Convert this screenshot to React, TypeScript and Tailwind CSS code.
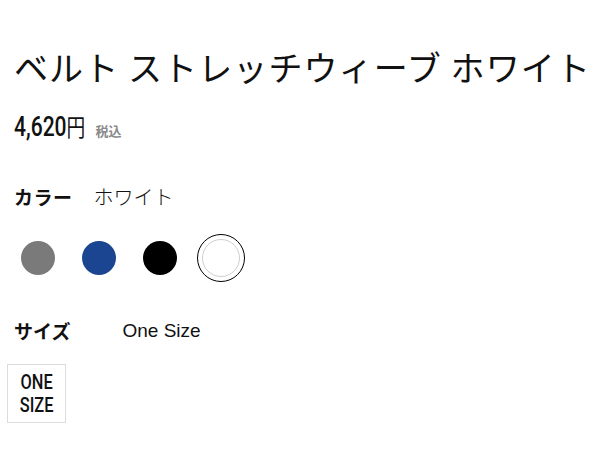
import { useState } from 'react'

const jp = { fontFamily: '"Noto Sans CJK JP", "Noto Sans", sans-serif' }
const cond = { fontFamily: '"Roboto", "Liberation Sans", sans-serif' }

type Swatch = { id: string; name: string; fill: string; ring?: string }

const swatches: Swatch[] = [
  { id: 'gray', name: 'グレー', fill: 'bg-[#7a7a7a]' },
  { id: 'navy', name: 'ネイビー', fill: 'bg-[#1b4591]' },
  { id: 'black', name: 'ブラック', fill: 'bg-black' },
  { id: 'white', name: 'ホワイト', fill: 'bg-white', ring: 'border border-[#cfcfcf]' },
]

export default function App() {
  const [selected, setSelected] = useState('white')
  const current = swatches.find((s) => s.id === selected)

  return (
    <div className="min-h-[450px] w-[600px] bg-white px-[14px] pt-[42px] text-[#111]" style={jp}>
      <h1 className="whitespace-nowrap text-[34px] font-normal leading-[50px] tracking-[1.1px]">ベルト ストレッチウィーブ ホワイト</h1>

      <div className="mt-[22px] flex items-baseline">
        <span className="inline-block origin-left scale-x-[0.78] whitespace-nowrap text-[27px] font-medium leading-none" style={cond}>
          4,620<span style={jp} className="text-[24px] font-normal">円</span>
        </span>
        <span className="-ml-[10px] text-[13px] font-bold text-[#8a8a8a]">税込</span>
      </div>

      <div className="mt-[41px] flex items-center leading-[30px]">
        <span className="text-[19px] font-bold tracking-[0.5px]">カラー</span>
        <span className="ml-[21px] text-[20px] font-light">{current?.name}</span>
      </div>

      <div className="mt-[22px] flex gap-[13px]">
        {swatches.map((s) => (
          <button
            key={s.id}
            type="button"
            onClick={() => setSelected(s.id)}
            aria-label={s.name}
            className={`flex h-[48px] w-[48px] items-center justify-center rounded-full border-[1.5px] ${
              selected === s.id ? 'border-black' : 'border-transparent'
            }`}
          >
            <span className={`block rounded-full ${s.fill} ${s.ring ?? ''} ${s.id === 'white' ? 'h-[38px] w-[38px]' : 'h-[34px] w-[34px]'}`} />
          </button>
        ))}
      </div>

      <div className="mt-[34px] flex items-center leading-[30px]">
        <span className="text-[19px] font-bold">サイズ</span>
        <span className="ml-[52px] text-[19px]" style={{ fontFamily: '"Liberation Sans", Arial, sans-serif' }}>
          One Size
        </span>
      </div>

      <div className="-ml-[7px] mt-[18px] flex h-[59px] w-[59px] flex-col items-center justify-center border border-[#dcdcdc]">
        <span className="inline-block scale-x-[0.78] text-[21px] font-medium leading-[23px]" style={cond}>
          ONE
        </span>
        <span className="inline-block scale-x-[0.78] text-[21px] font-medium leading-[23px]" style={cond}>
          SIZE
        </span>
      </div>
    </div>
  )
}
